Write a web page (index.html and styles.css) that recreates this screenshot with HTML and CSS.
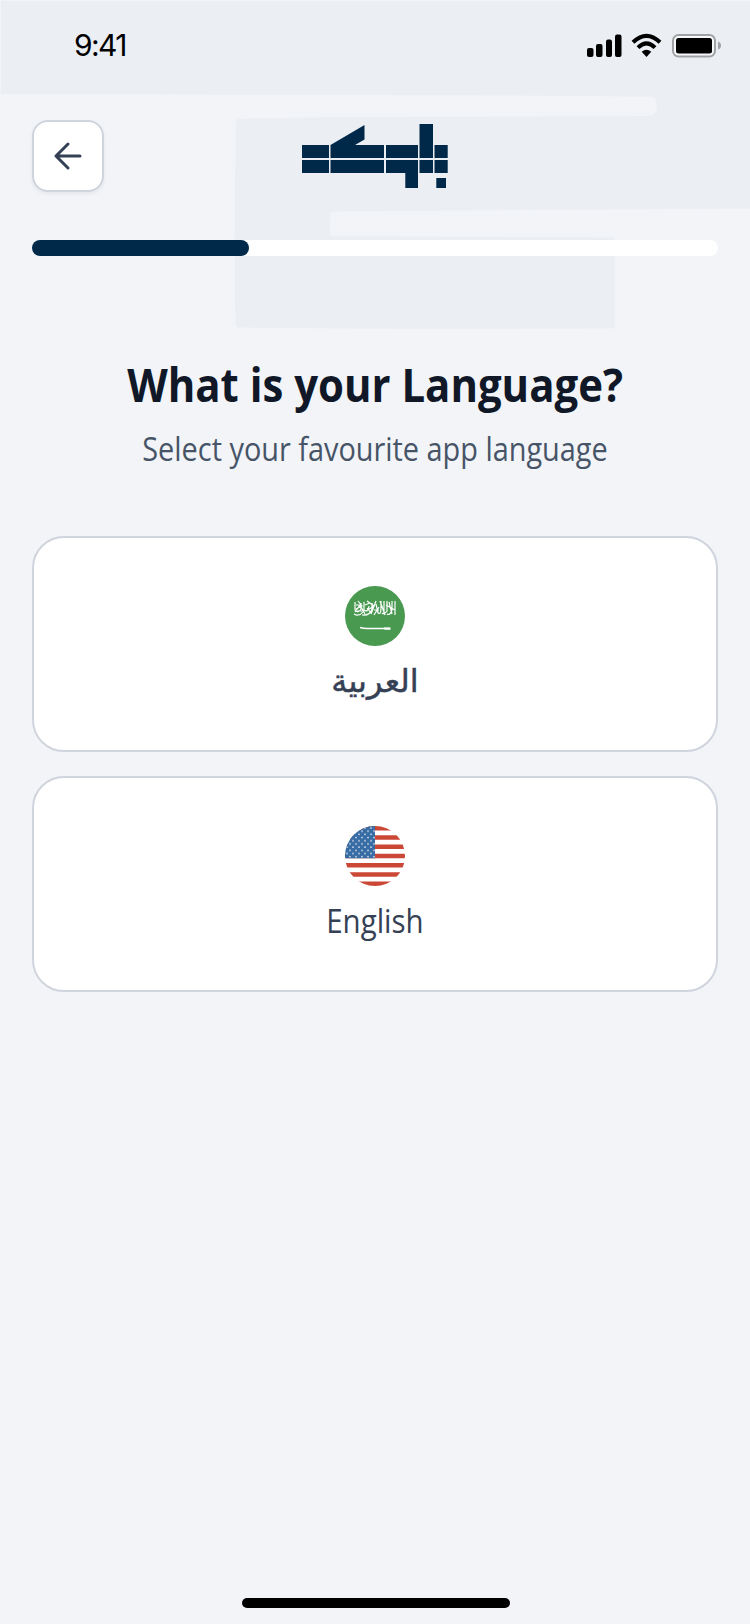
FILE: index.html
```html
<!DOCTYPE html>
<html lang="en">
<head>
<meta charset="utf-8">
<title>Language</title>
<link rel="stylesheet" href="styles.css">
</head>
<body>
<div class="screen">
  <svg class="backdrop" width="750" height="340" viewBox="0 0 750 340" aria-hidden="true">
    <path fill="#ebeff3" d="M1 1H750V208.800Q540 210 330.500 211.500L330 236L614.800 237.500V328.500Q420 330 238 327.500Q235.500 327 235.300 322Q234 220 235.800 122Q236 119 239 118.500Q300 117 400 117L648 116Q657 115 657 106Q657 98 652 97Q500 95 375 95L1 94Z"/>
  </svg>
  <header class="status">
    <span class="time">9:41</span>
    <svg class="status-icons" width="136" height="26" viewBox="0 0 136 26">
      <rect x="0" y="15" width="6.500" height="9" rx="2"/>
      <rect x="9" y="11" width="6.500" height="13" rx="2"/>
      <rect x="19" y="6.500" width="6" height="17.500" rx="2"/>
      <rect x="28" y="1.500" width="6.500" height="22.500" rx="2"/>
      <g fill="none" stroke="#000" stroke-width="4">
        <path d="M46 9.300Q59.500-3.700 73 9.300"/>
        <path d="M51 14.600Q59.500 6.200 68 14.600"/>
      </g>
      <path d="M54.700 18.800Q59.500 14.800 64.300 18.800L59.500 24Z"/>
      <rect x="86" y="2" width="42" height="21.500" rx="5.500" fill="#f7f8fa" stroke="#a0a2a5" stroke-width="2"/>
      <rect x="89" y="5" width="36" height="15.500" rx="2.500"/>
      <path fill="#a0a2a5" d="M131 8.500Q134 9.500 134 12.500T131 16.500Z"/>
    </svg>
  </header>
  <nav class="topbar">
    <button class="back" aria-label="Back">
      <svg width="30" height="30" viewBox="0 0 30 30" fill="none" stroke="#344054" stroke-width="3" stroke-linecap="round" stroke-linejoin="round"><path d="M27 15H3M15 3L3 15L15 27"/></svg>
    </button>
    <svg class="logo" width="146" height="64" viewBox="302 124 146 64" fill="#002849">
      <path d="M302 145H329V158H302ZM302 160H329V173H302ZM330.500 145L364.500 125V139.500L355 145H384V158H330.500ZM330.500 160H384V173H330.500ZM386 145H418V158H386ZM386 160H418V188H405.300V173H386ZM419.500 124H433V158H419.500ZM419.500 160H433V173H419.500ZM434.500 145H447.700V158H434.500ZM434.500 160H447.700V173H434.500ZM436.300 178H446V188H436.300Z"/>
    </svg>
  </nav>
  <div class="progress"><div class="progress-fill"></div></div>
  <main class="content">
    <h1 class="title"><span class="fit-title">What is your Language?</span></h1>
    <p class="subtitle"><span class="fit-subtitle">Select your favourite app language</span></p>
    <div class="options">
      <button class="option">
        <svg class="flag" width="60" height="60" viewBox="0 0 60 60">
          <circle cx="30" cy="30" r="30" fill="#499951"/>
          <g fill="none" stroke="#fff" stroke-width="1.200">
            <path d="M10 16V24Q13 28 16 23V17M9 28Q14 31 18 26M13 15L17 20L11 23M19 16V24Q23 27 24 20M17 29Q25 30 27 23V17M22 15L29 20L21 25M31 15L26 28M31 18L33 27Q36 29 36 22V15M29 29L34 21M35 15L40 29M39 15V28M42 15V25Q39 29 37 27M44 16L47 28M47 15V24Q45 30 42 28M50 15V29M41 19L50 24M11 19H15M20 19L25 17M29 24H34M10 26L15 19L20 28M12 25H19M22 22L26 27"/>
            <path stroke-width="1.500" d="M15 41.500Q19 42.800 24 42.500H45"/>
            <path stroke-width="2.200" d="M40 41.500V43.500M41 42.600H45.500"/>
          </g>
        </svg>
        <span class="label arabic" lang="ar" dir="rtl"><span class="fit-arabic">العربية</span></span>
      </button>
      <button class="option">
        <svg class="flag" width="60" height="60" viewBox="0 0 60 60">
          <defs>
            <clipPath id="disc"><circle cx="30" cy="30" r="30"/></clipPath>
            <pattern id="stars" width="6" height="6.400" patternUnits="userSpaceOnUse"><circle cx="2" cy="2" r=".75" fill="#fff"/><circle cx="5" cy="5.200" r=".75" fill="#fff"/></pattern>
          </defs>
          <g clip-path="url(#disc)">
            <path fill="#fff" d="M0 0H60V60H0Z"/>
            <path fill="#cb4837" d="M0 0H60V4.600H0ZM0 9.200H60V13.800H0ZM0 18.500H60V23.100H0ZM0 27.700H60V32.300H0ZM0 36.900H60V41.500H0ZM0 46.200H60V50.800H0ZM0 55.400H60V60H0Z"/>
            <path fill="#386ca4" d="M0 0H30V32.300H0Z"/>
            <path fill="url(#stars)" d="M0 0H30V32H0Z"/>
          </g>
        </svg>
        <span class="label"><span class="fit-english">English</span></span>
      </button>
    </div>
  </main>
  <div class="home-indicator"></div>
</div>
</body>
</html>
```
FILE: styles.css
```css
* { box-sizing: border-box; }
body { margin: 0; background: #f2f4f8; font-family: "Open Sans", "Noto Sans", sans-serif; }
.screen { position: relative; width: 750px; height: 1624px; display: flex; flex-direction: column; overflow: hidden; }
.backdrop { position: absolute; top: 0; left: 0; z-index: -1; }
.status { height: 94px; padding: 33px 27px 0 74px; display: flex; justify-content: space-between; align-items: flex-start; }
.time { font: 400 30px/25px Inter, sans-serif; letter-spacing: -1.6px; color: #000; }
.status-icons { display: block; }
.topbar { display: grid; grid-template-columns: 1fr 146px 1fr; padding: 26px 32px 0; height: 146px; align-items: start; }
.back { width: 72px; height: 72px; border: 2px solid #d0d5dd; border-radius: 16px; background: #fff; box-shadow: 0 2px 4px rgba(16,24,40,.06); padding: 0; display: flex; align-items: center; justify-content: center; }
.logo { margin-top: 4px; }
.progress { height: 16px; margin: 0 32px; border-radius: 8px; background: #fff; flex-shrink: 0; }
.progress-fill { width: 217px; height: 16px; border-radius: 8px; background: #002849; }
.content { padding: 98px 32px 0; flex: 1; }
.title, .subtitle { margin: 0; display: flex; justify-content: center; white-space: nowrap; }
.title { height: 60px; font-size: 46px; line-height: 60px; font-weight: 700; color: #101828; }
.subtitle { height: 44px; margin-top: 13px; font-size: 32px; line-height: 44px; font-weight: 400; color: #475467; }
.fit-title { transform: scaleX(.911); }
.fit-subtitle { transform: scaleX(.902); }
.options { display: grid; gap: 24px; margin-top: 65px; }
.option { height: 216px; border: 2px solid #d0d5dd; border-radius: 32px; background: #fff; padding: 48px 0 0; display: flex; flex-direction: column; align-items: center; gap: 11px; }
.flag { display: block; flex-shrink: 0; }
.label { font: 500 32px/48px "Open Sans", sans-serif; color: #344054; }
.arabic { font-family: "DejaVu Sans", sans-serif; font-weight: 400; -webkit-text-stroke: .5px #344054; }
.label span { display: block; }
.fit-english { transform: scaleX(.92); }
.home-indicator { width: 268px; height: 10px; border-radius: 5px; background: #000; margin: 0 240px 16px 242px; }
```
